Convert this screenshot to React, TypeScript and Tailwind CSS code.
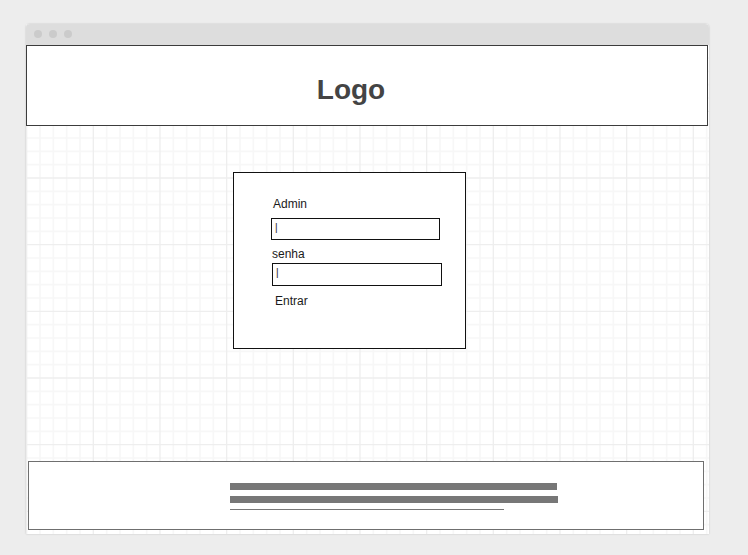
import React from "react";

// One tile covers 15 grid cells; every fifth line is a major one.
const MINOR_LINES = Array.from({ length: 15 }, (_, i) => i).filter((i) => i % 5 !== 0);
const MAJOR_LINES = [0, 5, 10];

function linePath(steps: number[]) {
  return steps.map((i) => `M${i * 40 + 2} 0V600M0 ${i * 40 + 2}H600`).join("");
}

function GridPaper() {
  return (
    <svg className="absolute inset-0 h-full w-full" aria-hidden="true">
      <defs>
        <pattern id="grid" x="0" y="20" width="200" height="200" patternUnits="userSpaceOnUse" viewBox="0 0 600 600">
          <path d={linePath(MINOR_LINES)} stroke="#f7f7f7" strokeWidth="5" fill="none" />
          <path d={linePath(MAJOR_LINES)} stroke="#eeeeee" strokeWidth="4" fill="none" />
        </pattern>
      </defs>
      <rect width="100%" height="100%" fill="url(#grid)" />
    </svg>
  );
}

function TitleBar() {
  return (
    <div className="flex h-[21px] items-center gap-[7px] rounded-t bg-[#dddddd] px-2 pb-px">
      <span className="size-2 rounded-full bg-[#cbcbcb]" />
      <span className="size-2 rounded-full bg-[#cbcbcb]" />
      <span className="size-2 rounded-full bg-[#cbcbcb]" />
    </div>
  );
}

function LoginForm() {
  return (
    <form
      className="flex h-[177px] w-[233px] flex-col items-start border border-[#111111] bg-white pt-[23px] pl-[37px] text-xs text-[#1a1a1a]"
      onSubmit={(e) => e.preventDefault()}
    >
      <label htmlFor="admin" className="pl-0.5">Admin</label>
      <input
        id="admin"
        type="text"
        defaultValue="|"
        className="mt-1.5 h-[22px] w-[169px] border border-[#111111] bg-white px-[3px] pb-1 text-[10px] outline-none"
      />
      <label htmlFor="senha" className="mt-1.5 pl-px">senha</label>
      <input
        id="senha"
        type="text"
        defaultValue="|"
        className="mt-px ml-px h-[23px] w-[170px] border border-[#111111] bg-white px-[3px] pb-1 text-[10px] outline-none"
      />
      <button type="submit" className="mt-[7px] pl-1">Entrar</button>
    </form>
  );
}

export default function App() {
  return (
    <div className="flex min-h-screen flex-col bg-[#ededed] pt-6 pr-[39px] pb-[21px] pl-[26px] font-['Liberation_Sans',Arial,sans-serif]">
      <div className="relative flex grow flex-col rounded-t bg-white shadow-[0_0_2px_rgba(0,0,0,0.2)]">
        <GridPaper />
        <div className="relative flex grow flex-col">
          <TitleBar />
          <header className="mr-px flex h-[81px] items-center justify-center border border-[#3c3c3c] bg-white pt-2 pr-8">
            <h1 className="text-[28px] leading-8 font-bold text-[#444444]">Logo</h1>
          </header>
          <main className="flex grow items-start justify-center pt-[46px] pr-9 pb-8">
            <LoginForm />
          </main>
          <footer className="mr-[5px] mb-1 ml-0.5 flex h-[69px] items-start justify-center border border-[#6f6f6f] bg-white pt-[21px] pl-14">
            <div className="flex w-[328px] flex-col gap-1.5">
              <div className="mr-px h-[7px] bg-[#777777]" />
              <div className="h-[7px] bg-[#777777]" />
              <div className="mr-[54px] h-px bg-[#777777]" />
            </div>
          </footer>
        </div>
      </div>
    </div>
  );
}
